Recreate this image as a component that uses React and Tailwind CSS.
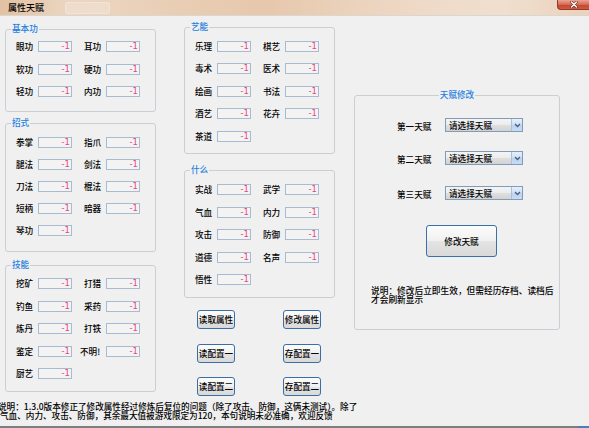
import React from "react";

function Val() {
  return (
    <div className="w-[34px] h-[11px] shrink-0 border border-[#a7bcd0] bg-[#f3f3f3] flex items-center justify-end pr-[1px]">
      <span className="font-['DejaVu_Sans',sans-serif] text-[8.5px] leading-none text-[#e8457c]">-1</span>
    </div>
  );
}

function Field({ label, lw = "w-[22px]" }) {
  return (
    <div className="flex items-center">
      <span className={`${lw} text-[8.6px] leading-none text-black whitespace-nowrap`}>{label}</span>
      <Val />
    </div>
  );
}

function Row({ a, b, bGap = "ml-[12px]", bw }) {
  return (
    <div className="flex items-center h-[11px]">
      <Field label={a} />
      {b && (
        <div className={bGap}>
          <Field label={b} lw={bw} />
        </div>
      )}
    </div>
  );
}

function Group({ title, center, className, children }) {
  return (
    <div className={`relative border border-[#c9cfd4] rounded-[3px] ${className}`}>
      <span
        className={`absolute -top-[7px] ${
          center ? "left-1/2 -translate-x-1/2" : "left-[5px]"
        } bg-[#f0f0f0] px-[1px] text-[8.6px] leading-[11px] text-[#1f7fe0] whitespace-nowrap`}
      >
        {title}
      </span>
      {children}
    </div>
  );
}

function Btn({ children, className = "" }) {
  return (
    <div
      className={`flex items-center justify-center border border-[#3a6ea5] rounded-[3px] bg-[linear-gradient(180deg,#fcfcfc,#f0f0f0_50%,#e4e4e4_51%,#d9d9d9)] text-[8.6px] leading-none text-black whitespace-nowrap ${className}`}
    >
      {children}
    </div>
  );
}

function Select() {
  return (
    <div className="w-[78px] h-[14px] flex border border-[#7f9db9] bg-[linear-gradient(180deg,#f4f4f4,#ececec_50%,#dfdfdf_51%,#d3d3d3)]">
      <span className="flex-1 pl-[3px] text-[8.6px] leading-[12px] text-black whitespace-nowrap">请选择天赋</span>
      <div className="w-[11px] h-full border-l border-[#a9c0dc] bg-[linear-gradient(180deg,#e6f0fb,#cfe0f5_50%,#bcd3ef_51%,#c9dbf3)] flex items-center justify-center">
        <svg width="7" height="5" viewBox="0 0 7 5">
          <path d="M1 1 L3.5 3.5 L6 1" fill="none" stroke="#4a5f80" strokeWidth="1.3" />
        </svg>
      </div>
    </div>
  );
}

function TalentRow({ label, className }) {
  return (
    <div className={`flex items-center pl-[42px] ${className}`}>
      <span className="w-[48px] mt-[3px] text-[8.6px] leading-none text-black whitespace-nowrap">{label}</span>
      <Select />
    </div>
  );
}

export default function App() {
  return (
    <div className="w-[589px] h-[428px] overflow-hidden flex flex-col bg-[#f0f0f0] font-medium font-['Noto_Sans_CJK_SC','Noto_Sans_CJK_JP',sans-serif]">
      {/* title bar */}
      <div className="h-[16px] shrink-0 flex bg-[linear-gradient(90deg,#e2c1a3,#ecd6c1_12%,#e9ceb5_30%,#e6c8ac_45%,#eed9c6_70%,#f0dfcf_85%,#ead2bc)] border-b border-[#dcd6d0]">
        <span className="ml-[8px] mt-[2px] text-[9px] leading-[11px] text-black whitespace-nowrap">属性天赋</span>
        <div className="ml-[21px] mt-[2px] w-[45px] h-[12px] rounded-[2px] bg-[#efdccb] border border-[#f2e4d6]" />
        <div className="ml-auto w-[32px] h-[10px] rounded-bl-[4px] border border-t-0 border-r-0 border-[#8e3b2b] bg-[linear-gradient(180deg,#e9a595,#d76a52_50%,#c8452d_55%,#cf5a40)] flex items-center justify-center">
          <svg width="8" height="7" viewBox="0 0 8 7">
            <path d="M1.5 1 L6.5 6 M6.5 1 L1.5 6" stroke="#5a1f14" strokeWidth="2.4" strokeLinecap="round" />
            <path d="M1.5 1 L6.5 6 M6.5 1 L1.5 6" stroke="#ffffff" strokeWidth="1.4" strokeLinecap="round" />
          </svg>
        </div>
      </div>

      {/* body */}
      <div className="flex-1 flex flex-col">
        <div className="flex items-start">
          {/* left column */}
          <div className="ml-[5px] w-[151px] flex flex-col">
            <Group title="基本功" className="mt-[13px] h-[83px]">
              <div className="pl-[10px] pt-[11px] flex flex-col gap-[11.6px]">
                <Row a="眼功" b="耳功" />
                <Row a="软功" b="硬功" />
                <Row a="轻功" b="内功" />
              </div>
            </Group>
            <Group title="招式" className="mt-[11px] h-[129px]">
              <div className="pl-[10px] pt-[13px] flex flex-col gap-[11px]">
                <Row a="拳掌" b="指爪" />
                <Row a="腿法" b="剑法" />
                <Row a="刀法" b="棍法" />
                <Row a="短柄" b="暗器" />
                <Row a="琴功" />
              </div>
            </Group>
            <Group title="技能" className="mt-[13px] h-[127px]">
              <div className="pl-[10px] pt-[12px] flex flex-col gap-[11.5px]">
                <Row a="挖矿" b="打猎" />
                <Row a="钓鱼" b="采药" />
                <Row a="炼丹" b="打铁" />
                <Row a="鉴定" b="不明!" bGap="ml-[8px]" bw="w-[26px]" />
                <Row a="厨艺" />
              </div>
            </Group>
          </div>

          {/* middle column */}
          <div className="ml-[28px] w-[151px] flex flex-col">
            <Group title="艺能" className="mt-[11px] h-[127px]">
              <div className="pl-[10px] pt-[12.5px] flex flex-col gap-[11.5px]">
                <Row a="乐理" b="棋艺" />
                <Row a="毒术" b="医术" />
                <Row a="绘画" b="书法" />
                <Row a="酒艺" b="花卉" />
                <Row a="茶道" />
              </div>
            </Group>
            <Group title="什么" className="mt-[16px] h-[128px]">
              <div className="pl-[10px] pt-[13px] flex flex-col gap-[11.5px]">
                <Row a="实战" b="武学" />
                <Row a="气血" b="内力" />
                <Row a="攻击" b="防御" />
                <Row a="道德" b="名声" />
                <Row a="悟性" />
              </div>
            </Group>
            <div className="mt-[12px] pl-[13px] grid grid-cols-[38px_38px] gap-x-[48px] gap-y-[14.5px]">
              <Btn className="h-[19px]">读取属性</Btn>
              <Btn className="h-[19px]">修改属性</Btn>
              <Btn className="h-[19px]">读配置一</Btn>
              <Btn className="h-[19px]">存配置一</Btn>
              <Btn className="h-[19px]">读配置二</Btn>
              <Btn className="h-[19px]">存配置二</Btn>
            </div>
          </div>

          {/* right column */}
          <div className="ml-[19px] w-[206px] flex flex-col">
            <Group title="天赋修改" center className="mt-[79px] h-[235px]">
              <div className="pt-[22px] flex flex-col">
                <TalentRow label="第一天赋" />
                <TalentRow label="第二天赋" className="mt-[19px]" />
                <TalentRow label="第三天赋" className="mt-[21px]" />
                <Btn className="mt-[25px] ml-[71px] w-[71px] h-[32px] border-[#3c70a8]">修改天赋</Btn>
                <div className="mt-[29px] pl-[16px] text-[8.7px] leading-[9.4px] text-black whitespace-nowrap">
                  <div>说明：修改后立即生效，但需经历存档、读档后</div>
                  <div>才会刷新显示</div>
                </div>
              </div>
            </Group>
          </div>
        </div>

        {/* bottom note */}
        <div className="mt-[6px] -ml-[2px] text-[8.6px] leading-[8.6px] text-black whitespace-nowrap">
          <div>说明：1.3.0版本修正了修改属性经过修炼后复位的问题（除了攻击、防御，这俩未测试）。除了</div>
          <div className="pl-[2px]">气血、内力、攻击、防御，其余最大值被游戏限定为120，本句说明未必准确，欢迎反馈</div>
        </div>
      </div>

      <div className="h-[2px] shrink-0 flex bg-[#7e7e7e]">
        <div className="ml-auto w-[11px] bg-[#4a7fb6]" />
      </div>
    </div>
  );
}
